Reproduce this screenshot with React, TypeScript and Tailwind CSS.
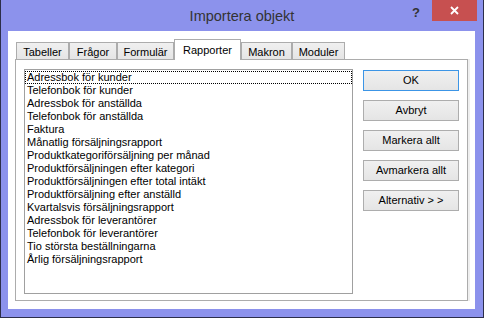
import React from "react"

const tabs = [
    { label: "Tabeller", w: "w-[53px]" },
    { label: "Frågor", w: "w-[48px]" },
    { label: "Formulär", w: "w-[57px]" },
    { label: "Rapporter", w: "w-[67px]", active: true },
    { label: "Makron", w: "w-[51px]" },
    { label: "Moduler", w: "w-[53px]" },
]

const reports = [
    "Adressbok för kunder",
    "Telefonbok för kunder",
    "Adressbok för anställda",
    "Telefonbok för anställda",
    "Faktura",
    "Månatlig försäljningsrapport",
    "Produktkategoriförsäljning per månad",
    "Produktförsäljningen efter kategori",
    "Produktförsäljningen efter total intäkt",
    "Produktförsäljning efter anställd",
    "Kvartalsvis försäljningsrapport",
    "Adressbok för leverantörer",
    "Telefonbok för leverantörer",
    "Tio största beställningarna",
    "Årlig försäljningsrapport",
]

const buttons = ["OK", "Avbryt", "Markera allt", "Avmarkera allt", "Alternativ > >"]

export default function App() {
    return (
        <div className="w-[484px] h-[318px] bg-[#8c92ec] border-l border-r border-b border-[#2c2e4a] font-['Liberation_Sans',Arial,sans-serif] text-black overflow-hidden">
            {/* Title bar */}
            <div className="h-[31px] grid grid-cols-[1fr_auto_1fr]">
                <div />
                <div className="pt-[7px] text-[14.5px] leading-[18px] text-[#333333]">Importera objekt</div>
                <div className="flex justify-end items-start pr-[6px]">
                    <span className="mt-[6px] mr-[12px] text-[13px] font-bold leading-[14px] text-[#333333]">?</span>
                    <div className="w-[45px] h-[21px] bg-[#c75050] flex items-center justify-center">
                        <svg width="9" height="9" viewBox="0 0 9 9">
                            <path d="M1 1L8 8M8 1L1 8" stroke="white" strokeWidth="1.8" />
                        </svg>
                    </div>
                </div>
            </div>

            {/* Client area */}
            <div className="ml-[7px] w-[467px] h-[278px] bg-white pt-[8px] pl-[7px]">
                {/* Tab strip */}
                <div className="flex items-end h-[20px] pl-[1px]">
                    {tabs.map((t) =>
                        t.active ? (
                            <div
                                key={t.label}
                                className={`${t.w} h-[21px] -mb-px relative z-10 bg-white border border-b-0 border-[#acacac] text-[11px] leading-[14px] pt-[3px] text-center`}
                            >
                                {t.label}
                            </div>
                        ) : (
                            <div
                                key={t.label}
                                className={`${t.w} h-[17px] bg-gradient-to-b from-[#f0f0f0] to-[#e5e5e5] border border-b-0 border-[#acacac] text-[11px] leading-[14px] pt-[2px] text-center`}
                            >
                                {t.label}
                            </div>
                        )
                    )}
                </div>

                {/* Tab panel */}
                <div className="w-[453px] h-[242px] border border-[#acacac] bg-white shadow-[2px_0_0_#efefef] pt-[9px] pl-[8px] flex">
                    <div className="w-[329px] h-[225px] border border-[#a0a0a0] pt-[1px]">
                        {reports.map((r, i) => (
                            <div
                                key={r}
                                className={`h-[13px] text-[11px] leading-[11px] whitespace-nowrap pl-[1px] border ${i === 0 ? "border-dotted border-black" : "border-transparent"}`}
                            >
                                {r}
                            </div>
                        ))}
                    </div>
                    <div className="ml-[10px] mt-[1px] flex flex-col gap-[9px]">
                        {buttons.map((b, i) => (
                            <div
                                key={b}
                                className={`w-[96px] h-[21px] border ${i === 0 ? "border-[#3c95e6]" : "border-[#adadad]"} bg-gradient-to-b from-[#f0f0f0] to-[#e5e5e5] text-[11px] leading-[19px] text-center`}
                            >
                                {b}
                            </div>
                        ))}
                    </div>
                </div>
            </div>
        </div>
    )
}
